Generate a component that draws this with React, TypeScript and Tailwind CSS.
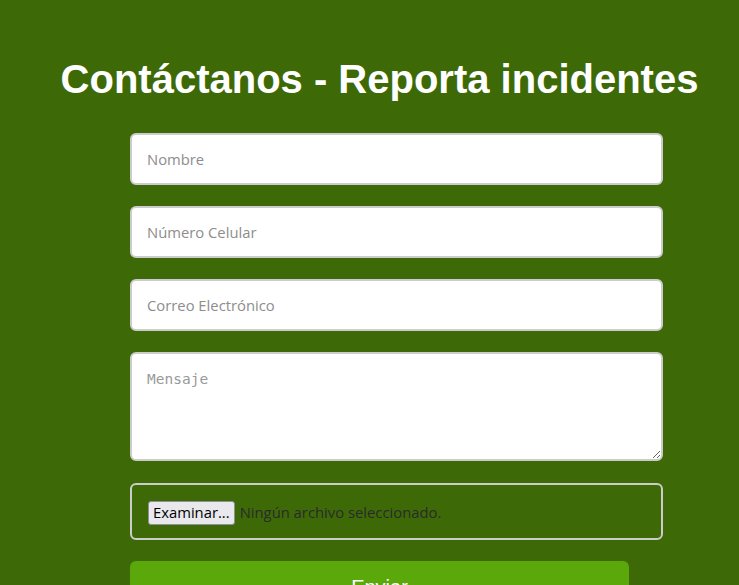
import { useState } from "react";

const fields = [
  { name: "nombre", placeholder: "Nombre", type: "text" },
  { name: "celular", placeholder: "Número Celular", type: "tel" },
  { name: "correo", placeholder: "Correo Electrónico", type: "email" },
];

export default function App() {
  const [fileName, setFileName] = useState("");

  return (
    <div className="min-h-[585px] bg-[#3d6a07] font-['Liberation_Sans',Arial,sans-serif]">
      <h1 className="pt-[55px] pl-5 text-center text-[40px] font-bold leading-[48px] text-white">
        Contáctanos - Reporta incidentes
      </h1>

      <form
        className="ml-[130px] mt-[30px] flex w-[533px] flex-col"
        onSubmit={(e) => e.preventDefault()}
      >
        <div className="flex flex-col gap-[21px]">
          {fields.map((f) => (
            <input
              key={f.name}
              name={f.name}
              type={f.type}
              placeholder={f.placeholder}
              className="h-[52px] w-full rounded-[6px] border-2 border-[#cccccc] bg-white px-[15px] font-['Open_Sans',sans-serif] text-[14.8px] text-[#333] placeholder:text-[#8d8d8d] outline-none"
            />
          ))}

          <textarea
            name="mensaje"
            placeholder="Mensaje"
            className="h-[109px] w-full rounded-[6px] border-2 border-[#cccccc] bg-white px-[15px] py-[16px] font-['DejaVu_Sans_Mono',monospace] text-[14.5px] leading-[18px] text-[#333] placeholder:text-[#9a9a9a] outline-none"
          />
        </div>

        <label className="mt-[22px] flex h-[57px] w-full cursor-pointer items-center rounded-[6px] border-2 border-[#cccccc] pl-[16px] pt-[2px]">
          <input
            type="file"
            className="hidden"
            onChange={(e) => setFileName(e.target.files?.[0]?.name ?? "")}
          />
          <span className="flex h-[24px] items-center rounded-[3px] border border-[#8f8f9d] bg-[#e9e9ed] px-[4px] font-['Open_Sans',sans-serif] text-[14.8px] text-black">
            Examinar...
          </span>
          <span className="ml-[5px] font-['Open_Sans',sans-serif] text-[14.8px] text-[#2a2a2a]">
            {fileName || "Ningún archivo seleccionado."}
          </span>
        </label>

        <button
          type="submit"
          className="mt-[21px] h-[52px] w-[499px] rounded-[6px] bg-[#5ba80b] text-[20px] text-white"
        >
          Enviar
        </button>
      </form>
    </div>
  );
}
